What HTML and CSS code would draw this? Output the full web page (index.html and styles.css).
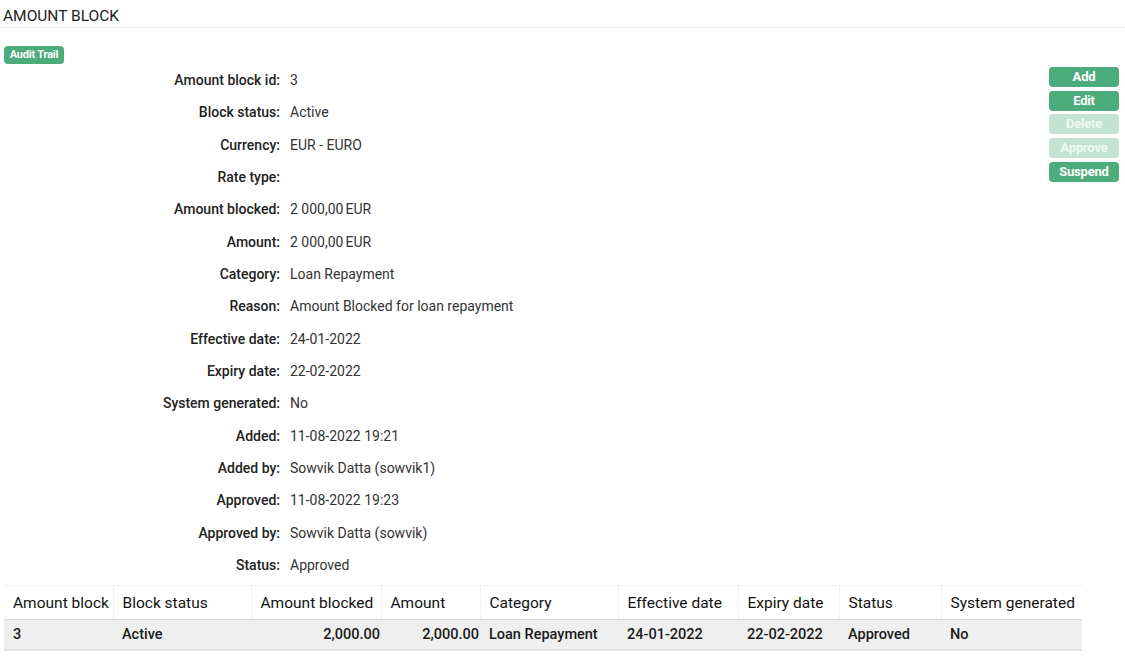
FILE: index.html
```html
<!DOCTYPE html>
<html>
<head>
<meta charset="utf-8">
<link rel="stylesheet" href="styles.css">
</head>
<body>
<div class="page">
  <h1 class="title">AMOUNT BLOCK</h1>
  <div class="toolbar"><button class="btn btn-small">Audit Trail</button></div>
  <div class="main">
    <dl class="details">
      <dt>Amount block id:</dt><dd>3</dd>
      <dt>Block status:</dt><dd>Active</dd>
      <dt>Currency:</dt><dd>EUR - EURO</dd>
      <dt>Rate type:</dt><dd></dd>
      <dt>Amount blocked:</dt><dd>2 000,00<span class="cur">EUR</span></dd>
      <dt>Amount:</dt><dd>2 000,00<span class="cur">EUR</span></dd>
      <dt>Category:</dt><dd>Loan Repayment</dd>
      <dt>Reason:</dt><dd>Amount Blocked for loan repayment</dd>
      <dt>Effective date:</dt><dd>24-01-2022</dd>
      <dt>Expiry date:</dt><dd>22-02-2022</dd>
      <dt>System generated:</dt><dd>No</dd>
      <dt>Added:</dt><dd>11-08-2022 19:21</dd>
      <dt>Added by:</dt><dd>Sowvik Datta (sowvik1)</dd>
      <dt>Approved:</dt><dd>11-08-2022 19:23</dd>
      <dt>Approved by:</dt><dd>Sowvik Datta (sowvik)</dd>
      <dt>Status:</dt><dd>Approved</dd>
    </dl>
    <div class="actions">
      <button class="btn">Add</button>
      <button class="btn">Edit</button>
      <button class="btn disabled">Delete</button>
      <button class="btn disabled">Approve</button>
      <button class="btn">Suspend</button>
    </div>
  </div>
  <table class="grid">
    <colgroup>
      <col class="c1"><col class="c2"><col class="c3"><col class="c4"><col class="c5"><col class="c6"><col class="c7"><col class="c8"><col class="c9">
    </colgroup>
    <thead>
      <tr>
        <th>Amount block</th><th>Block status</th><th>Amount blocked</th><th>Amount</th><th>Category</th><th>Effective date</th><th>Expiry date</th><th>Status</th><th>System generated</th>
      </tr>
    </thead>
    <tbody>
      <tr>
        <td>3</td><td>Active</td><td class="num">2,000.00</td><td class="num">2,000.00</td><td>Loan Repayment</td><td>24-01-2022</td><td>22-02-2022</td><td>Approved</td><td>No</td>
      </tr>
    </tbody>
  </table>
</div>
</body>
</html>
```

FILE: styles.css
```css
html, body {
  margin: 0;
  padding: 0;
  background: #fff;
}
body {
  font-family: Roboto, "Open Sans", sans-serif;
  color: #222;
}
.page {
  padding: 0 4px 0 4px;
}
.title {
  margin: 0 -4px;
  padding: 6px 3px 0 3px;
  height: 21px;
  font-size: 15.5px;
  font-weight: 400;
  line-height: 20px;
  color: #222;
  border-bottom: 1px solid #ececec;
}
.toolbar {
  margin-top: 18px;
  height: 18px;
}
.btn {
  display: block;
  border: none;
  background: #4dac7b;
  color: #fff;
  font-family: Roboto, "Open Sans", sans-serif;
  font-weight: 700;
  font-size: 13px;
  border-radius: 4px;
  padding: 0;
  height: 20px;
  line-height: 20px;
  width: 70px;
  text-align: center;
  letter-spacing: -0.2px;
}
.btn.disabled {
  background: #c3e3d2;
  color: #eef8f2;
}
.btn-small {
  width: 60px;
  height: 18px;
  line-height: 18px;
  font-size: 11px;
  letter-spacing: -0.2px;
}
.main {
  display: flex;
  align-items: flex-start;
}
.details {
  flex: 1;
  margin: 0;
  display: grid;
  grid-template-columns: 286px 1fr;
  grid-auto-rows: 32.33px;
  align-items: center;
  font-size: 14px;
}
.details dt {
  text-align: right;
  font-weight: 500;
  color: #222;
  padding-right: 10px;
}
.details dd {
  margin: 0;
  color: #333;
  font-weight: 400;
}
.cur {
  margin-left: 2px;
}
.actions {
  margin-top: 3px;
  margin-right: 2px;
  display: flex;
  flex-direction: column;
  gap: 3.7px;
}
.grid {
  margin-top: 4px;
  border-collapse: collapse;
  table-layout: fixed;
  width: 1078px;
  font-size: 15.5px;
}
.c1 { width: 109px; }
.c2 { width: 138px; }
.c3 { width: 130px; }
.c4 { width: 99px; }
.c5 { width: 138px; }
.c6 { width: 120px; }
.c7 { width: 101px; }
.c8 { width: 102px; }
.c9 { width: 141px; }
.grid th {
  text-align: left;
  font-weight: 400;
  color: #111;
  height: 33px;
  padding: 0 0 0 9px;
  border-top: 1px solid #f0f0f0;
  border-left: 1px solid #f0f0f0;
  border-bottom: 1px solid #d8d8d8;
  white-space: nowrap;
  overflow: hidden;
}
.grid th:first-child { border-left: none; }
.grid td {
  background: #efefef;
  height: 29px;
  padding: 0 0 0 9px;
  font-size: 14.5px;
  font-weight: 500;
  color: #1a1a1a;
  border-bottom: 2px solid #e2e2e2;
  white-space: nowrap;
}
.grid td.num {
  text-align: right;
  padding: 0 1px 0 0;
}
```
